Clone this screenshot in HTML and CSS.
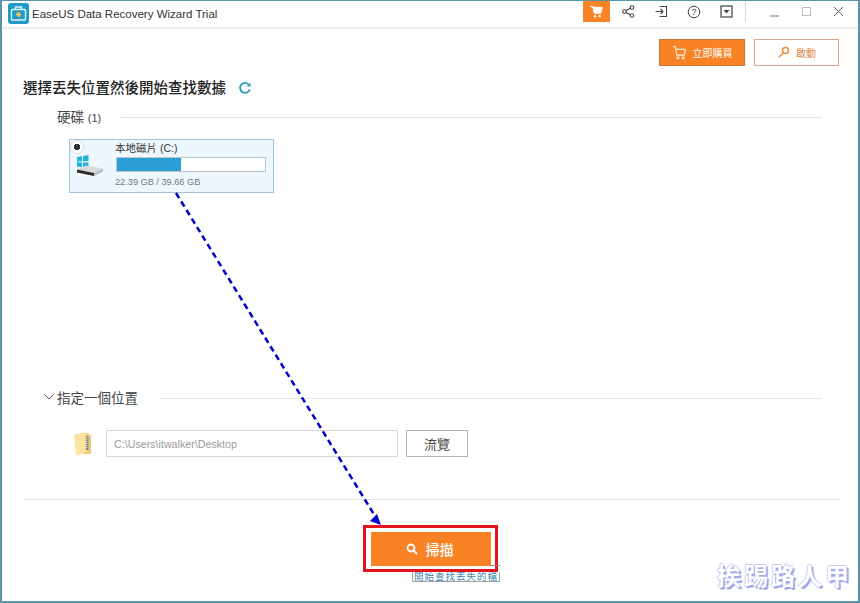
FILE: index.html
```html
<!DOCTYPE html>
<html lang="zh-Hant">
  <head>
    <meta charset="UTF-8" />
    <meta name="viewport" content="width=device-width, initial-scale=1.0" />
    <title>EaseUS Data Recovery Wizard Trial</title>
    <link rel="stylesheet" href="styles.css">
  </head>
  <body>
    <div class="window">
      <header class="titlebar">
        <svg class="app-logo" width="21" height="21" viewBox="0 0 21 21">
          <rect width="21" height="21" rx="3" fill="#1e9bc7" />
          <rect x="3.500" y="6.500" width="14" height="10.500" rx="1" fill="#1e9bc7" stroke="#dff3fa" stroke-width="1.400" />
          <path d="M7.500 6V4h6v2" fill="none" stroke="#dff3fa" stroke-width="1.300" />
          <path d="M10.500 9v5M8 11.500h5" stroke="#f3c64a" stroke-width="2" />
        </svg>
        <span class="app-name">EaseUS Data Recovery Wizard Trial</span>
        <nav class="toolbar">
          <span class="tool tool-active">
            <svg width="13" height="13" viewBox="0 0 14 14"><path d="M.5 1.500h2.500l1.500 7.500h7l2-6.500H3.500z" fill="#fff" stroke="#fff" stroke-linejoin="round" /><circle cx="5.500" cy="12" r="1.300" fill="#fff" /><circle cx="10.500" cy="12" r="1.300" fill="#fff" /></svg>
          </span>
          <span class="tool">
            <svg width="13" height="13" viewBox="0 0 13 13" fill="none" stroke="#444" stroke-width="1.100"><circle cx="2.500" cy="6.500" r="1.800" /><circle cx="10" cy="2.500" r="1.800" /><circle cx="10" cy="10.500" r="1.800" /><path d="M4 5.500l4.400-2.200M4 7.500l4.400 2.200" /></svg>
          </span>
          <span class="tool">
            <svg width="13" height="13" viewBox="0 0 13 13" fill="none" stroke="#444" stroke-width="1.100"><path d="M4.500 1.500h7v10h-7M.5 6.500h7M5.500 4l2.500 2.500L5.500 9" /></svg>
          </span>
          <span class="tool">
            <svg width="14" height="14" viewBox="0 0 14 14" fill="none" stroke="#444"><circle cx="7" cy="7" r="5.800" /><text x="7" y="10.300" class="help-mark">?</text></svg>
          </span>
          <span class="tool">
            <svg width="13" height="13" viewBox="0 0 13 13"><rect x="1" y="1" width="11" height="11" fill="none" stroke="#444" stroke-width="1.200" /><path d="M3.500 5h6l-3 3.500z" fill="#444" /></svg>
          </span>
          <span class="tool-sep"></span>
          <span class="win-btn"><svg width="11" height="11" viewBox="0 0 11 11"><path d="M1 10h9" stroke="#777" /></svg></span>
          <span class="win-btn"><svg width="11" height="11" viewBox="0 0 11 11"><rect x="1.500" y="1.500" width="8" height="8" fill="none" stroke="#bbb" /></svg></span>
          <span class="win-btn"><svg width="11" height="11" viewBox="0 0 11 11"><path d="M1 1l9 9M10 1l-9 9" stroke="#666" /></svg></span>
        </nav>
      </header>

      <div class="actions">
        <button class="btn-buy">
          <svg width="15" height="15" viewBox="0 0 14 14" fill="none" stroke="#ffe9d2" stroke-width="1.100"><path d="M1 1.500h2l1.500 8h7l1-5.500H3.500" /><circle cx="5.500" cy="12" r="1" /><circle cx="10.500" cy="12" r="1" /></svg>
          立即購買
        </button>
        <button class="btn-activate">
          <svg width="13" height="13" viewBox="0 0 13 13" fill="none" stroke="#f08a3c" stroke-width="1.500"><circle cx="8.500" cy="4.500" r="3" /><path d="M6.300 6.700L1.500 11.500" /></svg>
          啟動
        </button>
      </div>

      <h1 class="page-title">選擇丟失位置然後開始查找數據
        <svg width="14" height="14" viewBox="0 0 14 14" fill="none" stroke="#2a9bb5" stroke-width="1.800"><path d="M11.800 8.500A5 5 0 1 1 10.500 3.200" /><path d="M8.500 5.500h4v-4z" fill="#2a9bb5" stroke="none" /></svg>
      </h1>

      <section class="disks">
        <div class="section-head">
          <h2>硬碟 <span class="count">(1)</span></h2>
          <span class="rule"></span>
        </div>
        <div class="disk-card">
          <span class="radio"></span>
          <svg class="disk-icon" width="28" height="22" viewBox="0 0 28 22">
            <path d="M0 2l5-.8v5L0 6.500zM6 1l5.500-1v6L6 6.200zM0 7.300l5 .1v4.800L0 11.500zM6 7.400l5.500.1V13L6 12.300z" fill="#1fb6d8" />
            <path d="M0 14.500L9 10.500l17 3-9 4.500z" fill="#d9d9d9" />
            <path d="M0 14.500L17 18v3L0 17.500z" fill="#2b2b2b" />
            <path d="M17 18l9-4.500v3L17 21z" fill="#b8bcc0" />
          </svg>
          <div class="disk-info">
            <div class="disk-name">本地磁片 (C:)</div>
            <div class="disk-bar"><div class="disk-used" style="width: 43%"></div></div>
            <div class="disk-size">22.39 GB / 39.66 GB</div>
          </div>
        </div>
      </section>

      <section class="location">
        <div class="section-head">
          <svg class="chevron" width="10" height="6" viewBox="0 0 10 6" fill="none" stroke="#555"><path d="M.5.500L5 5 9.500.500" /></svg>
          <h2>指定一個位置</h2>
          <span class="rule"></span>
        </div>
        <div class="path-row">
          <svg class="folder" width="20" height="25" viewBox="0 0 20 25">
            <path d="M3 3h5l1 1h9v19H3z" fill="#eec76c" />
            <path d="M1 4.500L12 1v21L3 24.500z" fill="#fae4a0" />
            <path d="M12 2h4v19l-4 1z" fill="#f3d283" />
            <path d="M13 5h2.500v14H13z" fill="#7f8e96" />
            <path d="M13.700 6v12" stroke="#e8eef0" stroke-dasharray="1 1" />
          </svg>
          <input class="path-input" type="text" value="C:\Users\itwalker\Desktop" readonly />
          <button class="btn-browse">流覽</button>
        </div>
      </section>

      <footer class="scan-bar">
        <div class="scan-mark">
          <button class="btn-scan">
            <svg width="12" height="12" viewBox="0 0 12 12" fill="none" stroke="#fff" stroke-width="1.800"><circle cx="5" cy="5" r="3.500" /><path d="M7.600 7.600L11 11" /></svg>
            掃描
          </button>
          <div class="scan-tip"><span class="scan-tip-text">開始查找丟失的檔</span></div>
        </div>
      </footer>

      <svg class="arrow" width="860" height="603" viewBox="0 0 860 603">
        <path d="M176 193L375 516" fill="none" stroke="#0000cc" stroke-width="2.500" stroke-dasharray="6 4" />
        <path d="M381 525l-11-4 7-7z" fill="#0000cc" />
      </svg>
      <div class="watermark">挨踢路人甲</div>
    </div>
  </body>
</html>
```

FILE: styles.css
```css
* {
  box-sizing: border-box;
}

body {
  margin: 0;
  font-family: "Liberation Sans", "Noto Sans CJK TC", sans-serif;
  color: #444;
}

.window {
  position: relative;
  width: 860px;
  height: 603px;
  background: #fff;
  border: 2px solid #5b93ad;
  border-top-width: 1px;
  overflow: hidden;
}

.titlebar {
  display: flex;
  align-items: center;
  height: 28px;
  padding: 0 4px 1px 6px;
  border-bottom: 2px solid #eeeeee;
}

.app-logo {
  flex: none;
}

.app-name {
  margin-left: 3px;
  font-size: 11.500px;
  color: #333;
}

.toolbar {
  display: flex;
  align-items: center;
  height: 100%;
  margin-left: auto;
}

.tool {
  display: flex;
  align-items: center;
  justify-content: center;
  width: 27px;
  height: 21px;
  margin-right: 5.500px;
  align-self: flex-start;
}

.tool-active {
  background: #f98224;
}

.help-mark {
  font-family: "Liberation Sans", sans-serif;
  font-size: 9px;
  text-anchor: middle;
  fill: #444;
  stroke: none;
}

.tool-sep {
  width: 1px;
  height: 21px;
  margin-right: 12px;
  align-self: flex-start;
  background: #d8d8d8;
}

.win-btn {
  display: flex;
  justify-content: center;
  width: 32px;
  margin-bottom: 5px;
}

.actions {
  display: flex;
  justify-content: flex-end;
  gap: 9px;
  padding: 10px 19px 0 0;
}

.actions button {
  display: flex;
  align-items: center;
  justify-content: center;
  gap: 6px;
  height: 27px;
  padding: 0;
  font-family: inherit;
  font-size: 10px;
}

.btn-buy {
  width: 86px;
  background: #f98224;
  border: 1px solid #c8763a;
  color: #fff;
}

.btn-activate {
  width: 85px;
  background: #fff;
  border: 1px solid #d9a78a;
  color: #e08a4a;
}

.page-title {
  display: flex;
  align-items: center;
  gap: 12px;
  margin: 12px 0 0 21px;
  font-size: 14.500px;
  font-weight: 500;
  line-height: 20px;
  color: #222;
}

.disks {
  height: 289px;
  padding: 8px 36px 0 25px;
}

.disks .section-head {
  padding-left: 30px;
}

.section-head {
  display: flex;
  align-items: center;
  height: 20px;
}

.section-head h2 {
  margin: 0;
  font-size: 13.500px;
  font-weight: 400;
  color: #444;
  white-space: nowrap;
}

.count {
  font-size: 11px;
}

.rule {
  flex: 1;
  height: 1px;
  margin: 3px 0 0 20px;
  background: #e4e4e4;
}

.location .rule {
  margin-left: 21px;
}

.disk-card {
  position: relative;
  display: flex;
  width: 205px;
  height: 54px;
  margin: 13px 0 0 42px;
  padding: 1px 7px 0 7px;
  background: #eef7fe;
  border: 1px solid #a3c4db;
}

.radio {
  position: absolute;
  top: 0;
  left: 0;
  width: 14px;
  height: 14px;
  background: radial-gradient(circle, #333 3px, #fff 3.500px);
  border: 1px solid #d2dade;
  border-radius: 50%;
}

.disk-icon {
  flex: none;
  margin-top: 14px;
}

.disk-info {
  flex: 1;
  margin-left: 10px;
}

.disk-name {
  font-size: 10.500px;
  line-height: 14px;
  color: #333;
}

.disk-bar {
  width: 150px;
  height: 15px;
  margin: 2px 0 0 1px;
  background: #fff;
  border: 1px solid #b9c6cf;
}

.disk-used {
  height: 100%;
  background: #2a9fd6;
}

.disk-size {
  margin-top: 4px;
  font-size: 9.200px;
  line-height: 12px;
  color: #777;
}

.location {
  padding: 0 36px 0 0;
}

.location .section-head {
  padding-left: 42px;
}

.chevron {
  margin-right: 3px;
}

.path-row {
  display: flex;
  align-items: center;
  gap: 8px;
  margin: 23px 0 0 71px;
}

.folder {
  flex: none;
  margin-right: 5px;
}

.path-input {
  width: 292px;
  height: 27px;
  padding: 0 7px;
  border: 1px solid #d6d6d6;
  font-family: inherit;
  font-size: 10.700px;
  color: #9a9a9a;
}

.btn-browse {
  width: 62px;
  height: 27px;
  padding: 0;
  background: #fff;
  border: 1px solid #b5b5b5;
  font-family: inherit;
  font-size: 13px;
  color: #444;
}

.scan-bar {
  display: flex;
  justify-content: center;
  margin: 42px 18px 0 22px;
  padding: 25px 3px 0 0;
  border-top: 1px solid #e2e2e2;
}

.scan-mark {
  position: relative;
  width: 135px;
  height: 47px;
  padding: 4px 5px;
  border: 3px solid #e2141e;
}

.btn-scan {
  position: relative;
  z-index: 1;
  display: flex;
  align-items: center;
  justify-content: center;
  gap: 8px;
  width: 120px;
  height: 34px;
  padding: 0 3px 0 0;
  background: #f98224;
  border: none;
  font-family: inherit;
  font-size: 14px;
  font-weight: 500;
  color: #fff;
}

/* the tip sticks out from under the red frame, only its lower part is legible */
.scan-tip {
  position: absolute;
  top: 37px;
  left: 46px;
  width: 88px;
  padding-top: 6px;
  border-top: 1px solid #8c8c8c;
}

.scan-tip-text {
  display: block;
  height: 10px;
  background: #fff;
  border: 1px solid #a0a0a0;
  border-top: none;
  font-size: 9.500px;
  line-height: 9px;
  letter-spacing: 1px;
  text-align: center;
  color: #3a86b0;
  white-space: nowrap;
}

.arrow {
  position: absolute;
  top: -1px;
  left: -2px;
  pointer-events: none;
}

.watermark {
  position: absolute;
  right: 6px;
  bottom: 7px;
  font-size: 24px;
  font-weight: 700;
  letter-spacing: 3px;
  line-height: 34px;
  color: #fff;
  text-shadow: 1px 1px 0 #a3a8ea, 2px 2px 0 #a3a8ea, -1px 0 0 #c9ccf3, 0 -1px 0 #c9ccf3;
}
```
